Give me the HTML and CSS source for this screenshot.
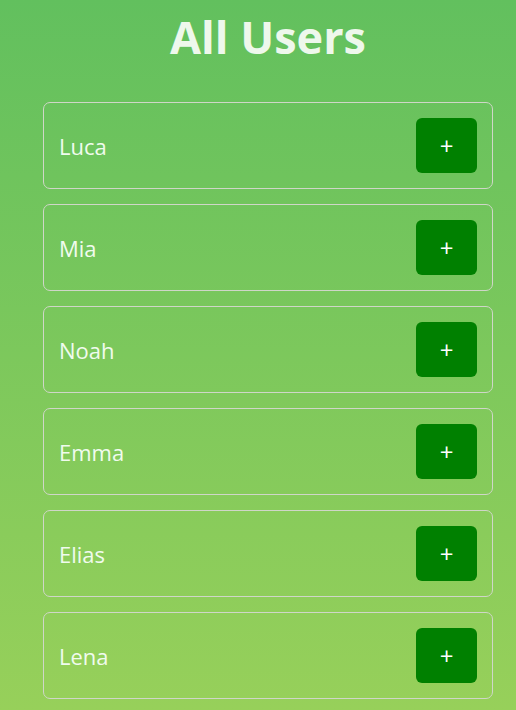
FILE: index.html
```html
<!DOCTYPE html>
<html>
<head>
<meta charset="utf-8">
<link rel="stylesheet" href="styles.css">
</head>
<body>
<main class="page">
  <h1 class="title">All Users</h1>
  <ul class="users">
    <li class="user"><span class="name">Luca</span><button class="add">+</button></li>
    <li class="user"><span class="name">Mia</span><button class="add">+</button></li>
    <li class="user"><span class="name">Noah</span><button class="add">+</button></li>
    <li class="user"><span class="name">Emma</span><button class="add">+</button></li>
    <li class="user"><span class="name">Elias</span><button class="add">+</button></li>
    <li class="user"><span class="name">Lena</span><button class="add">+</button></li>
  </ul>
</main>
</body>
</html>
```
FILE: styles.css
```css
html {
  height: 710px;
  background: linear-gradient(to bottom, #62c05e 0%, #97d05a 100%);
}
body {
  margin: 0;
  font-family: "Open Sans", "Noto Sans", sans-serif;
  color: #f0fbee;
}
.page {
  width: 450px;
  margin-left: 43px;
}
.title {
  margin: 0;
  padding-top: 5px;
  height: 102px;
  box-sizing: border-box;
  text-align: center;
  font-size: 45px;
  font-weight: 700;
  line-height: 64px;
  color: #eef8ec;
}
.users {
  list-style: none;
  margin: 0;
  padding: 0;
  display: flex;
  flex-direction: column;
  gap: 15px;
}
.user {
  display: flex;
  align-items: center;
  justify-content: space-between;
  height: 87px;
  box-sizing: border-box;
  padding: 0 15px;
  border: 1px solid #cfd6c8;
  border-radius: 7px;
}
.name {
  font-size: 22px;
}
.add {
  width: 61px;
  height: 55px;
  border: none;
  border-radius: 6px;
  background: #008000;
  color: #ffffff;
  font-family: "Open Sans", "Noto Sans", sans-serif;
  font-size: 24px;
  line-height: 1;
  padding: 0;
}
```
